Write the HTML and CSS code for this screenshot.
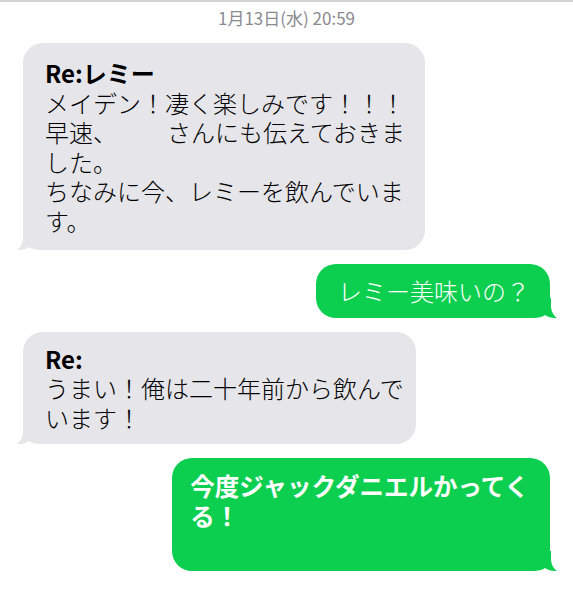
FILE: index.html
```html
<!DOCTYPE html>
<html lang="ja">
<head>
<meta charset="utf-8">
<title>メッセージ</title>
<link rel="stylesheet" href="styles.css">
</head>
<body>
<div class="screen">
  <div class="time">1月13日(水) 20:59</div>
  <div class="thread">
    <div class="row in">
      <div class="bubble gray b1">
        <svg class="tail" viewBox="0 0 26 20" width="26" height="20"><path d="M6 0 L26 0 L26 20 C18 20 14.5 19 12 17 C9 19.5 4 20 0 20 C3.5 17.5 6 13 6 8 Z"/></svg>
        <span class="subject">Re:レミー</span><br>メイデン！凄く楽しみです！！！<br>早速、<span class="redact"></span>さんにも伝えておきま<br>した。<br>ちなみに今、レミーを飲んでいま<br>す。
      </div>
    </div>
    <div class="row out">
      <div class="bubble green g1">
        <svg class="tail" viewBox="0 0 26 20" width="26" height="20"><path d="M6 0 L26 0 L26 20 C18 20 14.5 19 12 17 C9 19.5 4 20 0 20 C3.5 17.5 6 13 6 8 Z"/></svg>
        レミー美味いの？
      </div>
    </div>
    <div class="row in">
      <div class="bubble gray b3">
        <svg class="tail" viewBox="0 0 26 20" width="26" height="20"><path d="M6 0 L26 0 L26 20 C18 20 14.5 19 12 17 C9 19.5 4 20 0 20 C3.5 17.5 6 13 6 8 Z"/></svg>
        <span class="subject">Re:</span><br>うまい！俺は二十年前から飲んで<br>います！
      </div>
    </div>
    <div class="row out">
      <div class="bubble green g2">
        <svg class="tail" viewBox="0 0 26 20" width="26" height="20"><path d="M6 0 L26 0 L26 20 C18 20 14.5 19 12 17 C9 19.5 4 20 0 20 C3.5 17.5 6 13 6 8 Z"/></svg>
        今度ジャックダニエルかってく<br>る！
      </div>
    </div>
  </div>
</div>
</body>
</html>
```
FILE: styles.css
```css
html, body {
  margin: 0;
  padding: 0;
  background: #ffffff;
}

.screen {
  width: 573px;
  min-height: 600px;
  border-top: 2px solid #d2d2d4;
  box-sizing: border-box;
  font-family: "Noto Sans CJK JP", "Noto Sans", sans-serif;
}

.time {
  padding-top: 5px;
  height: 22px;
  line-height: 22px;
  font-size: 17px;
  color: #8a8a8f;
  text-align: center;
}

.thread {
  display: flex;
  flex-direction: column;
  gap: 14px;
  padding: 14px 23px 0 23px;
}

.row {
  display: flex;
}

.row.in {
  justify-content: flex-start;
}

.row.out {
  justify-content: flex-end;
}

.bubble {
  position: relative;
  border-radius: 20px;
  font-size: 24px;
  font-weight: 300;
  line-height: 29.5px;
  white-space: nowrap;
  padding: 12px 20px 12px 22px;
}

.bubble.gray {
  background: #e5e5ea;
  color: #000000;
}

.bubble.green {
  background: #0ccf4f;
  color: #ffffff;
}

.tail {
  position: absolute;
  bottom: 0;
  display: block;
}

.gray .tail {
  left: -6px;
  fill: #e5e5ea;
}

.green .tail {
  right: -7px;
  fill: #0ccf4f;
  transform: scaleX(-1);
}

.subject {
  font-weight: 700;
}

.redact {
  display: inline-block;
  width: 50px;
}

.b1 {
  padding-top: 15px;
  padding-bottom: 15px;
}

.b3 {
  padding-right: 12px;
}

.g2 {
  font-size: 24.5px;
  font-weight: 700;
  padding-top: 13px;
  padding-bottom: 41px;
  padding-left: 18px;
  padding-right: 21px;
}
```
